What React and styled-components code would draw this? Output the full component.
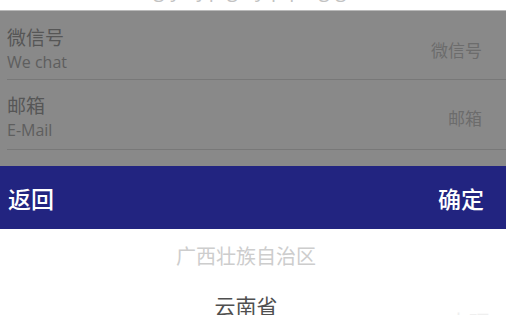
import React from 'react';
import styled, { createGlobalStyle } from 'styled-components';

const GlobalStyle = createGlobalStyle`
  html, body {
    margin: 0;
    padding: 0;
    width: 506px;
    height: 315px;
    overflow: hidden;
    background: #fff;
  }
  body {
    font-family: 'Open Sans', 'Noto Sans CJK SC', sans-serif;
  }
`;

const Page = styled.div`
  width: 506px;
  height: 315px;
  display: flex;
  flex-direction: column;
  overflow: hidden;
`;

const Header = styled.div`
  height: 10px;
  flex-shrink: 0;
  background: #fff;
  border-bottom: 1px solid #b9b9b9;
  overflow: hidden;
  display: flex;
  justify-content: center;
`;

const HeaderTitle = styled.span`
  font-size: 20px;
  line-height: 20px;
  margin-top: -20px;
  color: #c2c2c2;
  letter-spacing: 6px;
`;

const Form = styled.div`
  height: 155px;
  flex-shrink: 0;
  background: #898989;
  display: flex;
  flex-direction: column;
`;

const Row = styled.div`
  height: ${({ h }) => h}px;
  box-sizing: border-box;
  margin-left: 7px;
  padding: ${({ top }) => top}px 24px 0 0;
  border-bottom: 1px solid #787878;
  display: flex;
  align-items: flex-start;
  justify-content: space-between;
  flex-shrink: 0;
`;

const LabelBox = styled.div`
  display: flex;
  flex-direction: column;
`;

const Label = styled.span`
  font-family: 'Noto Sans CJK SC', sans-serif;
  font-size: 19px;
  line-height: 24px;
  color: #565656;
`;

const SubLabel = styled.span`
  font-family: 'Open Sans', sans-serif;
  font-size: 16px;
  line-height: 22px;
  margin-top: 2px;
  color: #5e5e5e;
`;

const Value = styled.span`
  font-family: 'Noto Sans CJK SC', sans-serif;
  font-size: 17px;
  line-height: 24px;
  color: #6c6c6c;
  align-self: center;
  margin-top: ${({ shift }) => shift}px;
`;

const Toolbar = styled.div`
  height: 63px;
  flex-shrink: 0;
  background: #222480;
  display: flex;
  align-items: center;
  justify-content: space-between;
  padding: 0 22px 0 8px;
`;

const ToolButton = styled.span`
  font-family: 'Noto Sans CJK SC', sans-serif;
  font-size: 23px;
  font-weight: 500;
  color: #fff;
`;

const Picker = styled.div`
  flex: 1;
  background: #fff;
  position: relative;
  display: flex;
  flex-direction: column;
  align-items: center;
  padding: 1px 14px 0 0;
`;

const PickerItem = styled.div`
  height: 50px;
  display: flex;
  align-items: center;
  justify-content: center;
  font-family: 'Noto Sans CJK SC', sans-serif;
  font-size: ${({ active }) => (active ? 21 : 20)}px;
  color: ${({ active }) => (active ? '#4f4f4f' : '#cdcdcd')};
  flex-shrink: 0;
`;

const SideItem = styled.span`
  position: absolute;
  right: 16px;
  top: 77px;
  font-family: 'Noto Sans CJK SC', sans-serif;
  font-size: 21px;
  color: #efefef;
`;

const rows = [
  { label: '微信号', sub: 'We chat', value: '微信号', h: 69, top: 14, shift: -4 },
  { label: '邮箱', sub: 'E-Mail', value: '邮箱', h: 70, top: 13, shift: -6 },
];

const App = () => (
  <Page>
    <GlobalStyle />
    <Header>
      <HeaderTitle>gy jpg ypp gg</HeaderTitle>
    </Header>
    <Form>
      {rows.map((r) => (
        <Row key={r.sub} h={r.h} top={r.top}>
          <LabelBox>
            <Label>{r.label}</Label>
            <SubLabel>{r.sub}</SubLabel>
          </LabelBox>
          <Value shift={r.shift}>{r.value}</Value>
        </Row>
      ))}
    </Form>
    <Toolbar>
      <ToolButton>返回</ToolButton>
      <ToolButton>确定</ToolButton>
    </Toolbar>
    <Picker>
      <PickerItem>广西壮族自治区</PickerItem>
      <PickerItem active>云南省</PickerItem>
      <SideItem>大理</SideItem>
    </Picker>
  </Page>
);

export default App;
